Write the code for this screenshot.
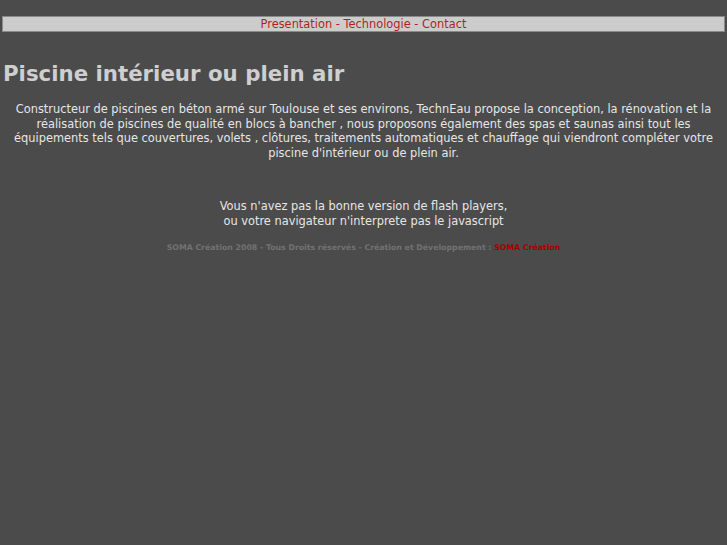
export default function App() {
  return (
    <div className="min-h-screen bg-[#4b4b4b] pt-[16px] px-[2px] font-['DejaVu_Sans',sans-serif]">
      <div className="border border-[#8a8a8a] bg-[#cccccc] text-center text-[11.4px] leading-[14px] text-[#b21f1f]">
        <a>Presentation</a> - <a>Technologie</a> - <a>Contact</a>
      </div>
      <h1 className="mt-[29px] pl-[1px] text-[21.3px] font-bold leading-[26px] text-[#cfcfcf]">
        Piscine intérieur ou plein air
      </h1>
      <p className="mt-[15px] px-[10px] text-center text-[11.4px] leading-[14.7px] text-[#e6e6e6]">
        Constructeur de piscines en béton armé sur Toulouse et ses environs, TechnEau propose la conception, la rénovation et la réalisation de piscines de qualité en blocs à bancher , nous proposons également des spas et saunas ainsi tout les équipements tels que couvertures, volets , clôtures, traitements automatiques et chauffage qui viendront compléter votre piscine d'intérieur ou de plein air.
      </p>
      <p className="mt-[38px] text-center text-[11.4px] leading-[14.7px] text-[#e6e6e6]">
        Vous n'avez pas la bonne version de flash players,
        <br />
        ou votre navigateur n'interprete pas le javascript
      </p>
      <p className="mt-[15px] text-center text-[7.8px] font-bold leading-[10px] text-[#727272]">
        SOMA Création 2008 - Tous Droits réservés - Création et Développement : <span className="text-[#a50000]">SOMA Création</span>
      </p>
    </div>
  );
}
